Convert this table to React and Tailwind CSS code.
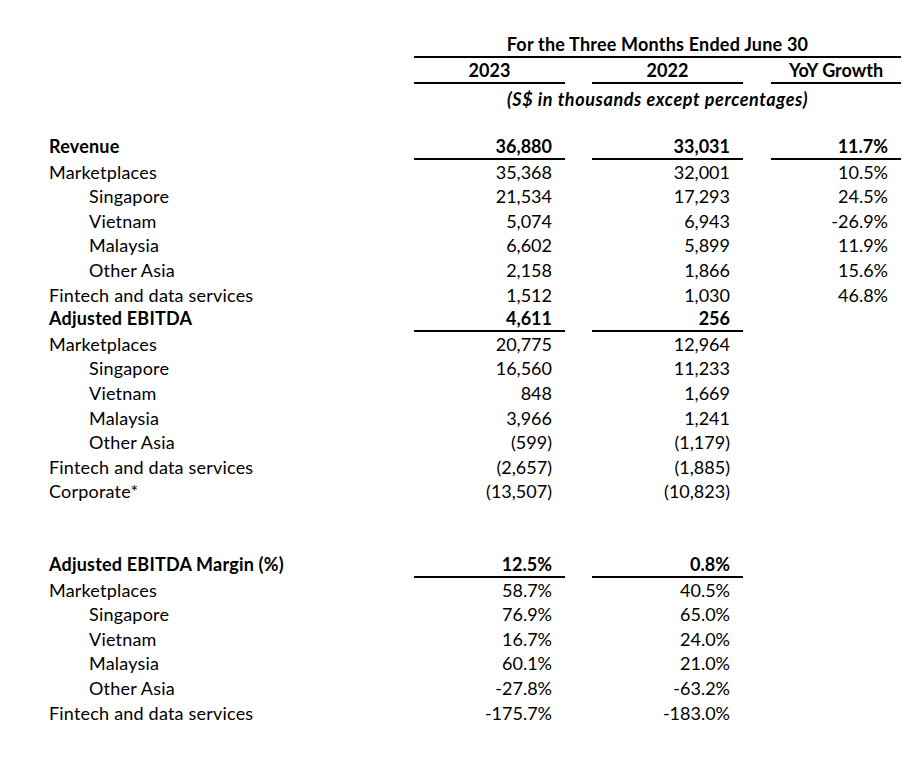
const rows = [
  { label: "Revenue", bold: true, line: true, v: ["36,880", "33,031", "11.7%"], lines: [1, 1, 1] },
  { label: "Marketplaces", v: ["35,368", "32,001", "10.5%"] },
  { label: "Singapore", indent: true, v: ["21,534", "17,293", "24.5%"] },
  { label: "Vietnam", indent: true, v: ["5,074", "6,943", "-26.9%"] },
  { label: "Malaysia", indent: true, v: ["6,602", "5,899", "11.9%"] },
  { label: "Other Asia", indent: true, v: ["2,158", "1,866", "15.6%"] },
  { label: "Fintech and data services", v: ["1,512", "1,030", "46.8%"] },
  { label: "Adjusted EBITDA", bold: true, line: true, v: ["4,611", "256", ""], lines: [1, 1, 0] },
  { label: "Marketplaces", v: ["20,775", "12,964", ""] },
  { label: "Singapore", indent: true, v: ["16,560", "11,233", ""] },
  { label: "Vietnam", indent: true, v: ["848", "1,669", ""] },
  { label: "Malaysia", indent: true, v: ["3,966", "1,241", ""] },
  { label: "Other Asia", indent: true, v: ["(599)", "(1,179)", ""] },
  { label: "Fintech and data services", v: ["(2,657)", "(1,885)", ""] },
  { label: "Corporate*", v: ["(13,507)", "(10,823)", ""] },
  { label: "", v: ["", "", ""] },
  { label: "", v: ["", "", ""] },
  { label: "Adjusted EBITDA Margin (%)", bold: true, line: true, v: ["12.5%", "0.8%", ""], lines: [1, 1, 0] },
  { label: "Marketplaces", v: ["58.7%", "40.5%", ""] },
  { label: "Singapore", indent: true, v: ["76.9%", "65.0%", ""] },
  { label: "Vietnam", indent: true, v: ["16.7%", "24.0%", ""] },
  { label: "Malaysia", indent: true, v: ["60.1%", "21.0%", ""] },
  { label: "Other Asia", indent: true, v: ["-27.8%", "-63.2%", ""] },
  { label: "Fintech and data services", v: ["-175.7%", "-183.0%", ""] },
];

const colW = ["w-[151px]", "w-[151px]", "w-[130px]"];

function Row({ r }) {
  const lead = r.line ? "leading-[22.6px]" : "leading-[24.6px]";
  const weight = r.bold ? "font-bold" : "";
  const cell = (i) => {
    const border = r.lines && r.lines[i] ? "border-b-2 border-black" : "";
    return (
      <div className={`${colW[i]} h-[24.6px] text-right pr-[13px] ${border} ${lead} ${weight}`}>
        {r.v[i]}
      </div>
    );
  };
  return (
    <div className="flex h-[24.6px]">
      <div className={`w-[365px] h-[24.6px] tracking-[0.2px] ${r.indent ? "pl-10" : ""} ${lead} ${weight}`}>
        {r.label}
      </div>
      {cell(0)}
      <div className="w-[27px]" />
      {cell(1)}
      <div className="w-[28px]" />
      {cell(2)}
    </div>
  );
}

export default function App() {
  return (
    <div
      className="w-[915px] h-[760px] bg-white text-black text-[18px] pl-[49px] pt-[33px]"
      style={{ fontFamily: "Lato, 'Open Sans', sans-serif" }}
    >
      <div className="flex">
        <div className="w-[365px]" />
        <div className="w-[487px] h-[25px] border-b-2 border-black text-center font-bold leading-[23px] tracking-[0.2px]">
          For the Three Months Ended June 30
        </div>
      </div>
      <div className="flex font-bold">
        <div className="w-[365px]" />
        <div className="w-[151px] h-[26px] border-b-2 border-black text-center leading-[24px]">2023</div>
        <div className="w-[27px]" />
        <div className="w-[151px] h-[26px] border-b-2 border-black text-center leading-[24px]">2022</div>
        <div className="w-[28px]" />
        <div className="w-[130px] h-[26px] border-b-2 border-black text-center leading-[24px]">YoY Growth</div>
      </div>
      <div className="flex">
        <div className="w-[365px]" />
        <div className="w-[487px] h-[30px] text-center font-bold italic tracking-[0.6px] leading-[30px]">
          (S$ in thousands except percentages)
        </div>
      </div>
      <div className="h-[21px]" />
      {rows.map((r, i) => (
        <Row key={i} r={r} />
      ))}
    </div>
  );
}
